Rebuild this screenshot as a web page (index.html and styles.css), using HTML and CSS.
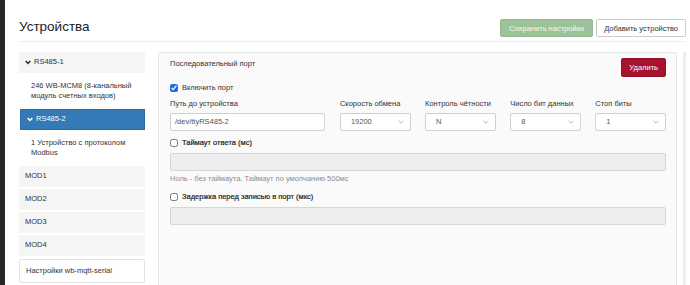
FILE: index.html
```html
<!DOCTYPE html>
<html lang="ru">
<head>
  <meta charset="UTF-8">
  <title>Устройства</title>
  <link rel="stylesheet" href="styles.css">
</head>
<body>
  <div class="edge"></div>

  <div class="page">
    <!-- Header -->
    <div class="header">
      <div class="title">Устройства</div>
      <div class="actions">
        <button class="btn btn-save">Сохранить настройки</button>
        <button class="btn btn-add">Добавить устройство</button>
      </div>
    </div>

    <div class="main">
      <!-- Sidebar -->
      <div class="sidebar">
        <div class="item port">
          <svg class="chev" viewBox="0 0 10 8" width="6" height="5"><path d="M1 1.5 L5 5.5 L9 1.5" fill="none" stroke="currentColor" stroke-width="2.6"/></svg>
          RS485-1
        </div>
        <div class="sub">246 WB-MCM8 (8-канальный модуль счетных входов)</div>
        <div class="item port active">
          <svg class="chev" viewBox="0 0 10 8" width="6" height="5"><path d="M1 1.5 L5 5.5 L9 1.5" fill="none" stroke="currentColor" stroke-width="2.6"/></svg>
          RS485-2
        </div>
        <div class="sub">1 Устройство с протоколом Modbus</div>
        <div class="item">MOD1</div>
        <div class="item">MOD2</div>
        <div class="item">MOD3</div>
        <div class="item">MOD4</div>
        <div class="item settings">Настройки wb-mqtt-serial</div>
      </div>

      <!-- Port panel -->
      <div class="panel">
        <div class="panel-head">
          <div class="panel-title">Последовательный порт</div>
          <button class="btn btn-delete">Удалить</button>
        </div>

        <label class="check first">
          <input type="checkbox" checked> Включить порт
        </label>

        <div class="fields">
          <div class="field">
            <div class="label">Путь до устройства</div>
            <div class="input">/dev/ttyRS485-2</div>
          </div>
          <div class="field">
            <div class="label">Скорость обмена</div>
            <div class="input select"><span>19200</span><svg viewBox="0 0 10 6" width="6" height="4"><path d="M1 1 L5 5 L9 1" fill="none" stroke="#999" stroke-width="1.2"/></svg></div>
          </div>
          <div class="field">
            <div class="label">Контроль чётности</div>
            <div class="input select"><span>N</span><svg viewBox="0 0 10 6" width="6" height="4"><path d="M1 1 L5 5 L9 1" fill="none" stroke="#999" stroke-width="1.2"/></svg></div>
          </div>
          <div class="field">
            <div class="label">Число бит данных</div>
            <div class="input select"><span>8</span><svg viewBox="0 0 10 6" width="6" height="4"><path d="M1 1 L5 5 L9 1" fill="none" stroke="#999" stroke-width="1.2"/></svg></div>
          </div>
          <div class="field">
            <div class="label">Стоп биты</div>
            <div class="input select"><span>1</span><svg viewBox="0 0 10 6" width="6" height="4"><path d="M1 1 L5 5 L9 1" fill="none" stroke="#999" stroke-width="1.2"/></svg></div>
          </div>
        </div>

        <label class="check opt">
          <input type="checkbox"> Таймаут ответа (мс)
        </label>
        <div class="input disabled"></div>
        <div class="help">Ноль - без таймаута. Таймаут по умолчанию 500мс</div>

        <label class="check opt second">
          <input type="checkbox"> Задержка перед записью в порт (мкс)
        </label>
        <div class="input disabled"></div>
      </div>

      <div class="strip"></div>
    </div>
  </div>
</body>
</html>
```

FILE: styles.css
```css
/* Page */
body {
  margin: 0;
  height: 285px;
  overflow: hidden;
  display: flex;
  background: white;
  font-family: 'Liberation Sans', Arial, sans-serif;
  font-size: 7.5px;
  line-height: 10.5px;
  color: #333;
}

.edge {
  width: 5px;
  background: #262626;
  flex-shrink: 0;
}

.page {
  flex: 1;
  padding: 0 4px 0 14px;
}

/* Header */
.header {
  display: flex;
  justify-content: space-between;
  align-items: center;
  padding: 19px 0 4px;
  border-bottom: 1px solid #eee;
}

.title {
  font-size: 13.5px;
  line-height: 18px;
  margin-top: -2px;
  color: #222;
}

.actions {
  display: flex;
  gap: 3px;
}

.btn {
  font-family: inherit;
  font-size: 7.5px;
  height: 18px;
  padding: 0 8px;
  border-radius: 2px;
  border: 1px solid #ccc;
  background: white;
  color: #333;
}

.btn-save {
  background: #9cc29a;
  border-color: #93bb90;
  color: #f4f9f3;
}

.btn-add {
  padding: 0 7px;
}

.btn-delete {
  height: 19px;
  padding: 0 7px;
  background: #a5132f;
  border-color: #95102a;
  color: white;
}

/* Layout */
.main {
  display: flex;
  margin-top: 10px;
}

.sidebar {
  width: 126px;
  flex-shrink: 0;
  display: flex;
  flex-direction: column;
  gap: 2px;
}

.item {
  height: 21px;
  display: flex;
  align-items: center;
  padding: 0 6px;
  background: #f5f5f5;
}

.item.port {
  gap: 2px;
}

.chev {
  margin-right: 1px;
}

.item.active {
  background: #337ab7;
  border: 1px solid #2e6da4;
  height: 19px;
  margin-left: 1px;
  color: white;
}

.item.settings {
  background: white;
  border: 1px solid #e3e3e3;
  border-radius: 2px;
  height: 22px;
  margin-top: 1px;
}

.sub {
  padding: 5.5px 8px 5.5px 12px;
}

/* Panel */
.panel {
  flex: 1;
  margin-left: 13px;
  height: 240px;
  padding: 5px 10px 0 11px;
  background: #fafafa;
  border: 1px solid #e6e6e6;
  border-radius: 2px;
}

.panel-head {
  display: flex;
  justify-content: space-between;
  align-items: flex-start;
}

.panel-title {
  padding-top: 1px;
}

.check {
  display: flex;
  align-items: center;
  gap: 4px;
}

.check input {
  width: 8px;
  height: 8px;
  margin: 0;
  accent-color: #1f6fd8;
}

.check.first {
  margin-top: 6px;
}

.check.opt {
  margin-top: 7px;
  color: #222;
  -webkit-text-stroke: 0.2px #222;
}

.check.second {
  margin-top: 8px;
}

.fields {
  display: grid;
  grid-template-columns: 2.2fr 1fr 1fr 1fr 1fr;
  gap: 14.5px;
  margin-top: 5px;
}

.label {
  margin-bottom: 4px;
}

.input {
  height: 18px;
  box-sizing: border-box;
  border: 1px solid #d0d0d0;
  border-radius: 2px;
  background: white;
  color: #555;
  padding: 0 4px;
  display: flex;
  align-items: center;
}

.select {
  justify-content: space-between;
  padding: 0 6px 0 10px;
}

.input.disabled {
  background: #eee;
  border-color: #d6d6d6;
  margin-top: 4px;
}

.help {
  margin-top: 3px;
  color: #8c8c8c;
}

.strip {
  width: 3px;
  margin-left: 6px;
  background: #eee;
}
```
